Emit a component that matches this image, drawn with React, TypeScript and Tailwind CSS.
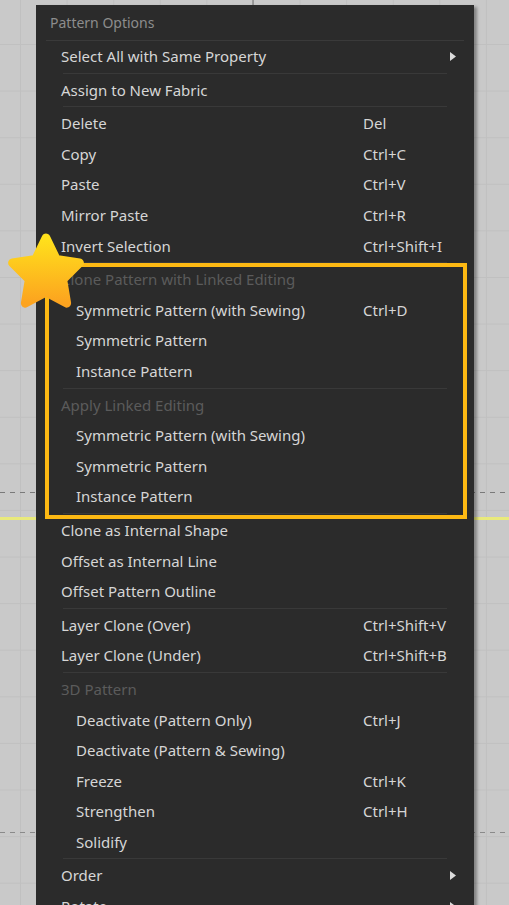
import React from "react";

type Row =
  | { kind: "item"; label: string; shortcut?: string; sub?: boolean; arrow?: boolean }
  | { kind: "title"; label: string }
  | { kind: "sep" };

const rows: Row[] = [
  { kind: "item", label: "Select All with Same Property", arrow: true },
  { kind: "sep" },
  { kind: "item", label: "Assign to New Fabric" },
  { kind: "sep" },
  { kind: "item", label: "Delete", shortcut: "Del" },
  { kind: "item", label: "Copy", shortcut: "Ctrl+C" },
  { kind: "item", label: "Paste", shortcut: "Ctrl+V" },
  { kind: "item", label: "Mirror Paste", shortcut: "Ctrl+R" },
  { kind: "item", label: "Invert Selection", shortcut: "Ctrl+Shift+I" },
  { kind: "sep" },
  { kind: "title", label: "Clone Pattern with Linked Editing" },
  { kind: "item", label: "Symmetric Pattern (with Sewing)", shortcut: "Ctrl+D", sub: true },
  { kind: "item", label: "Symmetric Pattern", sub: true },
  { kind: "item", label: "Instance Pattern", sub: true },
  { kind: "sep" },
  { kind: "title", label: "Apply Linked Editing" },
  { kind: "item", label: "Symmetric Pattern (with Sewing)", sub: true },
  { kind: "item", label: "Symmetric Pattern", sub: true },
  { kind: "item", label: "Instance Pattern", sub: true },
  { kind: "sep" },
  { kind: "item", label: "Clone as Internal Shape" },
  { kind: "item", label: "Offset as Internal Line" },
  { kind: "item", label: "Offset Pattern Outline" },
  { kind: "sep" },
  { kind: "item", label: "Layer Clone (Over)", shortcut: "Ctrl+Shift+V" },
  { kind: "item", label: "Layer Clone (Under)", shortcut: "Ctrl+Shift+B" },
  { kind: "sep" },
  { kind: "title", label: "3D Pattern" },
  { kind: "item", label: "Deactivate (Pattern Only)", shortcut: "Ctrl+J", sub: true },
  { kind: "item", label: "Deactivate (Pattern & Sewing)", sub: true },
  { kind: "item", label: "Freeze", shortcut: "Ctrl+K", sub: true },
  { kind: "item", label: "Strengthen", shortcut: "Ctrl+H", sub: true },
  { kind: "item", label: "Solidify", sub: true },
  { kind: "sep" },
  { kind: "item", label: "Order", arrow: true },
  { kind: "item", label: "Rotate", arrow: true },
];

const Arrow = () => (
  <svg width="6" height="9" viewBox="0 0 6 9" className="mr-[18px] ml-auto">
    <path d="M0 0 L6 4.5 L0 9 Z" fill="#dcdcdc" />
  </svg>
);

const Star = () => (
  <svg width="88" height="90" viewBox="0 0 100 100" preserveAspectRatio="none">
    <defs>
      <linearGradient id="starFill" x1="0" y1="0" x2="0" y2="1">
        <stop offset="0%" stopColor="#ffe11c" />
        <stop offset="100%" stopColor="#fca31f" />
      </linearGradient>
    </defs>
    <polygon
      points="50,10 61.76,33.82 88.04,37.64 69.02,56.18 73.51,82.36 50,70 26.49,82.36 30.98,56.18 11.96,37.64 38.24,33.82"
      fill="url(#starFill)"
      stroke="url(#starFill)"
      strokeWidth="10"
      strokeLinejoin="round"
    />
  </svg>
);

const Canvas = () => (
  <svg width="509" height="905" className="absolute inset-0">
    <line x1="253" y1="0" x2="253" y2="6" stroke="#6a6a6a" strokeWidth="1" />
    <line x1="0" y1="492.5" x2="509" y2="492.5" stroke="#7a7a7a" strokeWidth="1" strokeDasharray="5 5" />
    <line x1="0" y1="832.5" x2="509" y2="832.5" stroke="#8a8a8a" strokeWidth="1" strokeDasharray="5 5" />
    <line x1="0" y1="518.5" x2="509" y2="518.5" stroke="#e9ea7c" strokeWidth="3" />
  </svg>
);

export default function App() {
  return (
    <div
      className="relative h-[905px] w-[509px] overflow-hidden bg-[#c9c9c9] bg-[linear-gradient(to_right,#c0c0c0_1px,transparent_1px),linear-gradient(to_bottom,#c0c0c0_1px,transparent_1px)] bg-[size:46.6px_46.6px] bg-[position:20px_44px]"
      style={{ fontFamily: '"Noto Sans", "Open Sans", sans-serif' }}
    >
      <Canvas />

      <div className="relative ml-[36px] mt-[5px] w-[438px] bg-[#2b2b2b] shadow-[3px_2px_3px_rgba(0,0,0,0.35)]">
        <div className="flex h-[35px] items-center pl-[14px] text-[14px] text-[#8d8d8d]">
          Pattern Options
        </div>
        <div className="mx-[10px] h-px bg-[#3a3a3a]" />

        {rows.map((row, i) => {
          if (row.kind === "sep") {
            return (
              <div key={i} className="flex h-[3px] items-center px-[27px]">
                <div className="h-px w-full bg-[#393939]" />
              </div>
            );
          }
          if (row.kind === "title") {
            return (
              <div key={i} className="flex h-[30.6px] items-center pl-[25px] text-[15px] text-[#5b5b5b]">
                {row.label}
              </div>
            );
          }
          return (
            <div key={i} className="flex h-[30.6px] items-center text-[15px] text-[#d6d6d6]">
              <span className={`${row.sub ? "pl-[40px]" : "pl-[25px]"} w-[327px] shrink-0`}>
                {row.label}
              </span>
              {row.shortcut && <span>{row.shortcut}</span>}
              {row.arrow && <Arrow />}
            </div>
          );
        })}
      </div>

      <div className="absolute left-[45px] top-[263px] h-[256px] w-[422px] border-[4px] border-[#fdb913]" />

      <div className="absolute left-[2px] top-[229px]">
        <Star />
      </div>
    </div>
  );
}
